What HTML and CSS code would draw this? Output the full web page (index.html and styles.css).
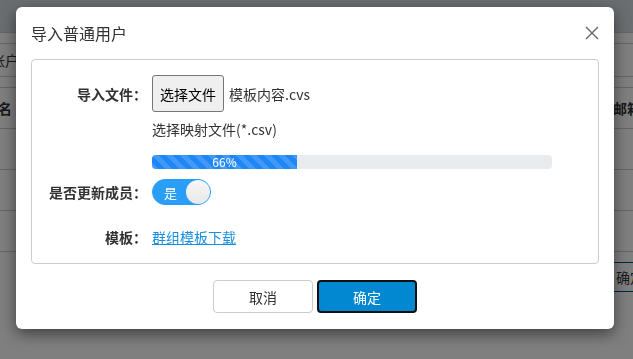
FILE: index.html
```html
<!DOCTYPE html>
<html>
<head>
    <title>导入普通用户</title>
    <link rel="stylesheet" href="styles.css">
</head>
<body>
    <div class="page">
        <div class="topbar"></div>
        <div class="search-row">
            <div class="cut-left">账户</div>
        </div>
        <div class="table">
            <div class="row head">
                <div class="cut-left">名</div>
                <div class="cut-right">邮箱</div>
            </div>
            <div class="row"></div>
            <div class="row"></div>
            <div class="row"></div>
            <div class="row foot">
                <div class="spacer"></div>
                <div class="page-btn">确定</div>
            </div>
        </div>
    </div>

    <div class="overlay"></div>

    <div class="modal">
        <div class="modal-header">
            <h2>导入普通用户</h2>
            <button class="close" aria-label="关闭">
                <svg width="14" height="14" viewBox="0 0 14 14">
                    <path d="M1 1 L13 13 M13 1 L1 13" stroke="#666" stroke-width="1.4" fill="none"/>
                </svg>
            </button>
        </div>

        <div class="panel">
            <div class="form-row row-file">
                <label>导入文件：</label>
                <div class="field">
                    <button class="file-btn">选择文件</button>
                    <span class="file-name">模板内容.cvs</span>
                </div>
            </div>
            <div class="form-row row-hint">
                <label></label>
                <div class="field">选择映射文件(*.csv)</div>
            </div>
            <div class="form-row row-progress">
                <label></label>
                <div class="field">
                    <div class="progress">
                        <div class="progress-bar" style="width: 36.25%">66%</div>
                    </div>
                </div>
            </div>
            <div class="form-row row-switch">
                <label>是否更新成员：</label>
                <div class="field">
                    <div class="switch">
                        <span class="switch-text">是</span>
                        <span class="knob"></span>
                    </div>
                </div>
            </div>
            <div class="form-row row-link">
                <label>模板：</label>
                <div class="field"><a href="#">群组模板下载</a></div>
            </div>
        </div>

        <div class="modal-footer">
            <button class="btn btn-cancel">取消</button>
            <button class="btn btn-ok">确定</button>
        </div>
    </div>
</body>
</html>
```

FILE: styles.css
```css
body {
    margin: 0;
    font-family: "Noto Sans CJK SC", "Noto Sans", sans-serif;
    font-size: 14px;
    color: #333;
    background: #fff;
    overflow: hidden;
}

/* background page */
.page {
    width: 633px;
    height: 359px;
}
.topbar {
    height: 32px;
    background: #d6dde3;
    border-bottom: 1px solid #ccc;
}
.search-row {
    height: 32px;
    margin-top: 10px;
    border-top: 1px solid #ccc;
    border-bottom: 1px solid #ccc;
    display: flex;
    align-items: center;
}
.cut-left {
    width: 19px;
    display: flex;
    justify-content: flex-end;
    overflow: hidden;
    white-space: nowrap;
}
.cut-right {
    width: 20px;
    margin-left: auto;
    overflow: hidden;
    white-space: nowrap;
    font-weight: bold;
}
.row.head .cut-left {
    width: 12px;
}
.table {
    margin-top: 10px;
    border-top: 1px solid #ccc;
}
.row {
    height: 40px;
    border-bottom: 1px solid #ccc;
    display: flex;
    align-items: center;
}
.row.head {
    font-weight: bold;
}
.row.foot {
    border-bottom: none;
    align-items: flex-start;
    padding-top: 10px;
}
.spacer {
    flex: 1;
}
.page-btn {
    width: 17px;
    height: 28px;
    line-height: 28px;
    padding-left: 2px;
    border-top: 1px solid #004c80;
    border-bottom: 1px solid #004c80;
    white-space: nowrap;
    overflow: hidden;
}

.overlay {
    position: fixed;
    top: 0;
    left: 0;
    right: 0;
    bottom: 0;
    background: rgba(0, 0, 0, 0.5);
}

/* modal */
.modal {
    position: absolute;
    left: 16px;
    top: 7px;
    width: 598px;
    height: 322px;
    background: #fff;
    border-radius: 6px;
    box-shadow: 0 5px 15px rgba(0, 0, 0, 0.5);
    box-sizing: border-box;
    padding: 0 15px;
}
.modal-header {
    height: 52px;
    display: flex;
    align-items: center;
    justify-content: space-between;
}
.modal-header h2 {
    margin: 0;
    font-size: 16px;
    font-weight: normal;
    color: #333;
}
.close {
    border: none;
    background: none;
    padding: 0;
    width: 14px;
    height: 14px;
    cursor: pointer;
}
.close svg {
    display: block;
}

.panel {
    height: 205px;
    box-sizing: border-box;
    border: 1px solid #ccc;
    border-radius: 4px;
    padding-top: 15px;
}
.form-row {
    display: flex;
    align-items: center;
}
.form-row label {
    width: 115px;
    flex: none;
    text-align: right;
    font-weight: bold;
    margin-right: 5px;
}
.field {
    display: flex;
    align-items: center;
}
.row-file {
    height: 37px;
}
.file-btn {
    height: 37px;
    padding: 0 7px;
    font-family: inherit;
    font-size: 14px;
    color: #000;
    background: #efefef;
    border: 1px solid #767676;
    border-radius: 3px;
}
.file-name {
    margin-left: 5px;
}
.row-hint {
    height: 18px;
    margin-top: 8px;
}
.row-progress {
    margin-top: 17px;
}
.progress {
    width: 400px;
    height: 14px;
    background: #e9ecef;
    border-radius: 4px;
    overflow: hidden;
}
.progress-bar {
    height: 14px;
    line-height: 14px;
    text-align: center;
    color: #fff;
    font-size: 12px;
    background-color: #1e87f5;
    background-image: linear-gradient(45deg, rgba(255,255,255,.15) 25%, transparent 25%, transparent 50%, rgba(255,255,255,.15) 50%, rgba(255,255,255,.15) 75%, transparent 75%, transparent);
    background-size: 14px 14px;
}
.row-switch {
    margin-top: 10px;
}
.switch {
    width: 59px;
    height: 26px;
    box-sizing: border-box;
    background: #2a9ef7;
    border: 1px solid #2a9ef7;
    border-radius: 13px;
    display: flex;
    align-items: center;
    justify-content: space-between;
}
.switch-text {
    color: #fff;
    font-size: 13px;
    margin-left: 11px;
}
.knob {
    width: 24px;
    height: 24px;
    border-radius: 50%;
    background: linear-gradient(#f7f7f7, #e8e8e8);
}
.row-link {
    margin-top: 22px;
}
.row-link a {
    color: #1a8fe0;
    text-decoration: underline;
}

.modal-footer {
    display: flex;
    justify-content: center;
    gap: 4px;
    margin-top: 16px;
}
.btn {
    width: 100px;
    height: 33px;
    font-family: inherit;
    font-size: 14px;
    border-radius: 4px;
    cursor: pointer;
}
.btn-cancel {
    background: #fff;
    color: #333;
    border: 1px solid #ccc;
}
.btn-ok {
    background: #0288d1;
    color: #fff;
    border: 2px solid #111;
}
```
